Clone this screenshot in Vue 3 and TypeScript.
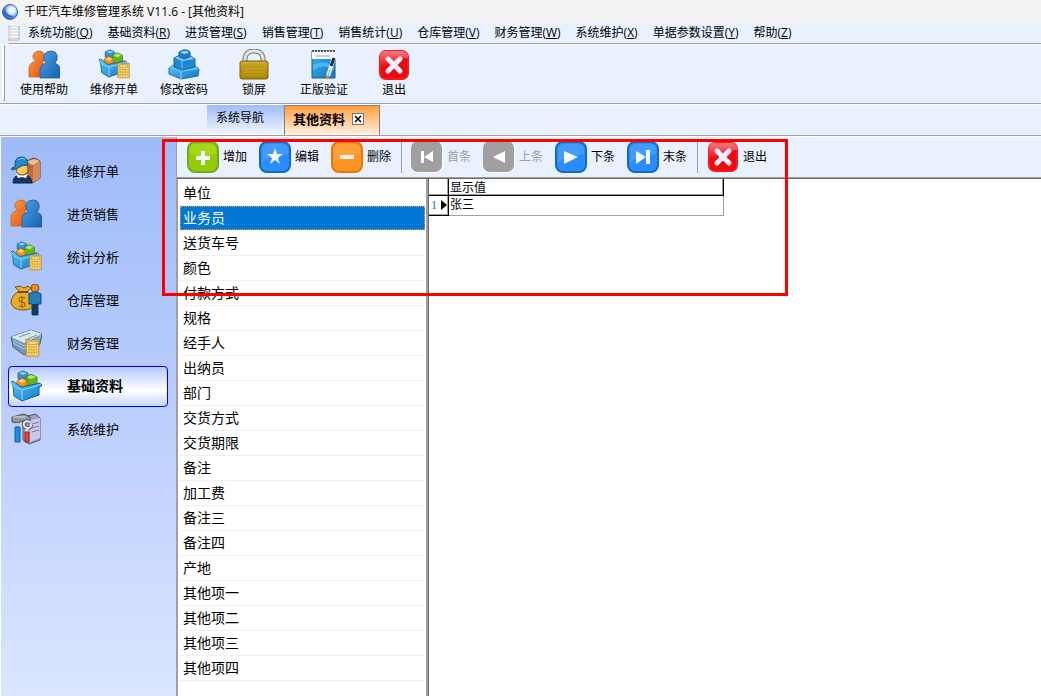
<script setup lang="ts">
import { ref } from 'vue'

interface MenuEntry { label: string; key: string }
interface Action { label: string; icon: string; disabled?: boolean }

const menus: MenuEntry[] = [
  { label: '系统功能', key: 'Q' },
  { label: '基础资料', key: 'R' },
  { label: '进货管理', key: 'S' },
  { label: '销售管理', key: 'T' },
  { label: '销售统计', key: 'U' },
  { label: '仓库管理', key: 'V' },
  { label: '财务管理', key: 'W' },
  { label: '系统维护', key: 'X' },
  { label: '单据参数设置', key: 'Y' },
  { label: '帮助', key: 'Z' },
]

const tools: Action[] = [
  { label: '使用帮助', icon: 'people' },
  { label: '维修开单', icon: 'boxcalc' },
  { label: '修改密码', icon: 'blocks' },
  { label: '锁屏', icon: 'lock' },
  { label: '正版验证', icon: 'note' },
  { label: '退出', icon: 'close' },
]

const modules: Action[] = [
  { label: '维修开单', icon: 'courier' },
  { label: '进货销售', icon: 'people' },
  { label: '统计分析', icon: 'boxcalc' },
  { label: '仓库管理', icon: 'bag' },
  { label: '财务管理', icon: 'money' },
  { label: '基础资料', icon: 'box' },
  { label: '系统维护', icon: 'repair' },
]
const activeModule = ref('基础资料')

const recordGroups: Action[][] = [
  [
    { label: '增加', icon: 'add' },
    { label: '编辑', icon: 'star' },
    { label: '删除', icon: 'minus' },
  ],
  [
    { label: '首条', icon: 'first', disabled: true },
    { label: '上条', icon: 'prev', disabled: true },
    { label: '下条', icon: 'next' },
    { label: '末条', icon: 'last' },
  ],
  [{ label: '退出', icon: 'close' }],
]

const categories: string[] = [
  '单位', '业务员', '送货车号', '颜色', '付款方式', '规格', '经手人', '出纳员', '部门', '交货方式',
  '交货期限', '备注', '加工费', '备注三', '备注四', '产地', '其他项一', '其他项二', '其他项三', '其他项四',
]
const activeCategory = ref('业务员')
const rows: string[] = ['张三']
</script>

<template>
  <div class="app">
    <svg class="defs" width="0" height="0" aria-hidden="true">
      <defs>
        <linearGradient id="gOrange" x1="0" y1="0" x2="1" y2="1"><stop offset="0" stop-color="#ffa04a" /><stop offset="1" stop-color="#e04e08" /></linearGradient>
        <linearGradient id="gBlue" x1="0" y1="0" x2="1" y2="1"><stop offset="0" stop-color="#52a3e2" /><stop offset="1" stop-color="#1261b4" /></linearGradient>
        <linearGradient id="gSky" x1="0" y1="0" x2="1" y2="1"><stop offset="0" stop-color="#5ec6f6" /><stop offset="1" stop-color="#0f78c4" /></linearGradient>
        <linearGradient id="gRed" x1="0" y1="0" x2="0" y2="1"><stop offset="0" stop-color="#f8868a" /><stop offset="1" stop-color="#f0141c" /></linearGradient>
        <linearGradient id="gGold" x1="0" y1="0" x2="0" y2="1"><stop offset="0" stop-color="#c9a92a" /><stop offset=".5" stop-color="#b8940c" /><stop offset="1" stop-color="#a98505" /></linearGradient>
        <linearGradient id="gPage" x1="0" y1="0" x2="1" y2="1"><stop offset="0" stop-color="#35b2ea" /><stop offset="1" stop-color="#1479c4" /></linearGradient>
        <radialGradient id="gOrb" cx=".62" cy=".38" r=".65"><stop offset="0" stop-color="#ffffff" /><stop offset=".4" stop-color="#cfe5fb" /><stop offset=".75" stop-color="#4e8edb" /><stop offset="1" stop-color="#1d57b4" /></radialGradient>

        <symbol id="i-people" viewBox="0 0 32 32">
          <path d="M1 28V19q0-5 7-7Q4 10 5 6q2-4 6-4t6 4q1 4-2 7v15z" fill="url(#gOrange)" stroke="#c06a30" stroke-width=".8" />
          <path d="M12 29V21q0-5 6-7-3-4-2-8 2-4 7-4t6 4q1 5-2 8 5 2 5 6v9z" fill="url(#gBlue)" stroke="#235c9b" stroke-width=".8" />
        </symbol>
        <symbol id="i-box" viewBox="0 0 32 32">
          <path d="M8 3l5-2 5 2v6l-5 2-5-2z" fill="#2f8fd6" stroke="#1c5f9e" stroke-width=".8" /><path d="M9 3l4-1 4 1-4 2z" fill="#8fd4fa" />
          <path d="M16 7l5-3 6 3v9H16z" fill="#64b41c" stroke="#407f18" stroke-width=".8" /><path d="M17 7l4-2 5 2-5 2z" fill="#b5ea62" />
          <path d="M7 11l5-3 5 3v7H7z" fill="#f8921a" stroke="#ad6710" stroke-width=".8" /><path d="M8 11l4-2 4 2-4 2z" fill="#ffd45d" />
          <path d="M1 12l2-1 8 6 19-4 2 2-3 3v7L12 31 4 26l-1-10z" fill="url(#gSky)" stroke="#1c618f" />
          <path d="M1 12l3 4 8 4 11-3 8-3M12 20v10" fill="none" stroke="#8adeff" />
        </symbol>
        <symbol id="i-calc" viewBox="0 0 16 20">
          <path d="M1 1h14v18H1z" fill="#f8cf68" stroke="#b68529" /><path d="M3 3h10v3H3z" fill="#e3e69a" stroke="#a88c36" stroke-width=".7" />
          <path d="M3 9h10M3 12h10M3 15h10" stroke="#c89a38" stroke-width="1.5" stroke-dasharray="2 1" />
        </symbol>
        <symbol id="i-boxcalc" viewBox="0 0 32 32"><use href="#i-box" width="29" height="29" /><use href="#i-calc" x="19" y="13" width="13" height="17" /></symbol>
        <symbol id="i-blocks" viewBox="0 0 32 32">
          <path d="M1 19l6-4h18l6 5-1 7-17 3L1 25z" fill="url(#gSky)" stroke="#1f70ae" /><path d="M1 19l12 4 18-3-6-5H7z" fill="#5fc0f2" /><path d="M13 23v7" stroke="#8cddff" fill="none" />
          <path d="M6 9l6-3h9l6 4v8l-13 3-8-3z" fill="#1f86d0" stroke="#1765a3" /><path d="M7 9l7 3 12-2-5-4h-8z" fill="#7bd3fb" /><path d="M14 12v8" stroke="#69c6f5" />
          <path d="M11 3l4-2h4l3 2v5l-6 2-5-2z" fill="#1d7cc8" stroke="#1765a3" /><path d="M12 3l4 2 5-1-2-2h-4z" fill="#8bdcff" />
        </symbol>
        <symbol id="i-lock" viewBox="0 0 32 32">
          <path d="M7 14V9q1-7 9-7t9 7v5" fill="none" stroke="#777" stroke-width="5" /><path d="M7 14V9q1-7 9-7t9 7v5" fill="none" stroke="#e2e2e2" stroke-width="3" />
          <rect x="2" y="12" width="28" height="18" rx="2" fill="url(#gGold)" stroke="#806508" /><path d="M5 14h22M5 20h22M5 23h22M5 26h22" stroke="#e1c960" opacity=".4" />
        </symbol>
        <symbol id="i-note" viewBox="0 0 32 32">
          <path d="M4 2h23v27H4z" fill="url(#gPage)" stroke="#2e5773" /><path d="M4 2h24v8H4z" fill="#f6f8f9" /><path d="M4 2h24" stroke="#4b5a66" stroke-dasharray="2 1" stroke-width="2" /><path d="M8 7h14" stroke="#8ca8b9" />
          <path d="M5 16q9-6 21 1v4q-10-7-21 0z" fill="#6bd1f8" opacity=".55" /><path d="M27 5L20 27" stroke="#f4f8fb" stroke-width="4" /><path d="M26 9l-3 8" stroke="#142a48" stroke-width="3" /><path d="M22 20l-2 7" stroke="#8ba8cc" stroke-width="1" /><path d="M20 26l-1 4" stroke="#e09445" stroke-width="2" />
        </symbol>
        <symbol id="i-close" viewBox="0 0 32 32">
          <rect x="1" y="1" width="30" height="30" rx="7" fill="#f3080f" /><path d="M2 17V8q0-6 6-6h16q6 0 6 6v1Q22 9 15 13T2 17z" fill="url(#gRed)" opacity=".9" /><rect x="2" y="2" width="28" height="28" rx="6" fill="none" stroke="#ff7a7e" opacity=".3" />
          <path d="M10 10l12 12M22 10L10 22" stroke="#f0efff" stroke-width="5" stroke-linecap="round" />
        </symbol>
        <symbol id="i-courier" viewBox="0 0 32 32">
          <path d="M14 7l10-4 6 3v17l-7 5-9-4z" fill="#b96d3b" stroke="#663c25" /><path d="M15 7l8 3 7-4-6-2z" fill="#edc293" /><path d="M23 10l7-3v16l-7 5z" fill="#d58a57" />
          <circle cx="12" cy="14" r="6" fill="#ffcb55" stroke="#7f4e18" /><path d="M5 12V9q0-7 7-7 6 0 6 8-7 0-10 3l-6 2q-2-2 3-3z" fill="#2588c8" stroke="#155284" /><path d="M8 5q4-3 7-1" stroke="#7fd1f1" fill="none" />
          <path d="M3 28q0-7 6-8l3 3 4-3q5 1 6 8z" fill="#16395f" stroke="#0b223e" /><path d="M6 19l2 4 4-1 4 1 2-4-6 2z" fill="#fff" />
        </symbol>
        <symbol id="i-bag" viewBox="0 0 32 32">
          <path d="M9 7L5 3l5-1 4 2 4-2 3 2-4 4q8 4 7 12-1 6-11 6T1 19q0-7 8-12z" fill="#e7ad24" stroke="#81520d" /><path d="M8 8h10" stroke="#754208" stroke-width="2" /><path d="M15 14q-6-2-6 1 0 3 3 3t3 3-6 1M12 12v12" stroke="#87540e" fill="none" />
          <circle cx="25" cy="4" r="4" fill="#e98b22" stroke="#8a4f16" /><path d="M19 10q6-4 12 0v10h-3v11h-6V20h-3z" fill="#247fb8" stroke="#164772" /><path d="M22 20h6v11h-6z" fill="#173960" />
        </symbol>
        <symbol id="i-money" viewBox="0 0 32 32">
          <path d="M1 10L21 3l11 4-2 10-16 11L3 20z" fill="#7797b3" stroke="#45627f" /><path d="M1 10L21 3l11 4-18 9z" fill="#d6e7ee" /><path d="M3 13l11 6 17-9M3 16l11 6 16-9" stroke="#b4cbdb" fill="none" /><path d="M9 10l11-4M15 13l12-5" stroke="#7594aa" />
          <use href="#i-calc" x="15" y="12" width="15" height="18" />
        </symbol>
        <symbol id="i-repair" viewBox="0 0 32 32">
          <path d="M13 4l13-3 4 4v22l-11 4-6-4z" fill="#9c9ac9" stroke="#56547f" /><path d="M20 7l10-2v20l-10 4z" fill="#c9c8e8" /><path d="M22 11l7-2M22 15l7-2M22 19l7-2" stroke="#77749b" />
          <path d="M2 4l12-3 6 3v5l-8-1-4 2-6-1z" fill="#8e959b" stroke="#4c5359" /><path d="M3 4h13" stroke="#e2e6e9" /><path d="M6 10h3v5H6z" fill="#bdc7ce" /><path d="M5 14h5v15H5z" fill="#1c8fdd" stroke="#0e5c99" />
          <path d="M20 9q-4-2-6 1-1 4 3 5 4 0 4-3" fill="none" stroke="#596069" stroke-width="4" /><path d="M20 9q-4-2-6 1-1 4 3 5 4 0 4-3" fill="none" stroke="#e4e8eb" stroke-width="2" /><path d="M17 16v6" stroke="#dce2e6" stroke-width="3" /><path d="M15 19h4v10h-4z" fill="#e24237" stroke="#9a2420" />
        </symbol>
        <symbol id="i-add" viewBox="0 0 32 32"><rect x="1" y="1" width="30" height="30" rx="7" fill="#94cd08" stroke="#74a822" stroke-width="2" /><path d="M3 9q0-6 6-6h14q6 0 6 6v4q-13 3-26 0z" fill="#b2df27" opacity=".6" /><path d="M16 10v14M9 17h14" stroke="#f3f6ff" stroke-width="4" /></symbol>
        <symbol id="i-bluebase" viewBox="0 0 32 32"><rect x="1" y="1" width="30" height="30" rx="7" fill="#2a8dff" stroke="#1769bc" stroke-width="2" /><path d="M3 9q0-6 6-6h14q6 0 6 6v4Q15 14 3 21z" fill="#59a9ff" opacity=".5" /></symbol>
        <symbol id="i-star" viewBox="0 0 32 32"><use href="#i-bluebase" /><path d="M16 7l2 6h6l-5 4 2 6-5-4-5 4 2-6-5-4h6z" fill="#f3f6ff" /></symbol>
        <symbol id="i-minus" viewBox="0 0 32 32"><rect x="1" y="1" width="30" height="30" rx="7" fill="#ff9422" stroke="#e87512" stroke-width="2" /><path d="M3 9q0-6 6-6h14q6 0 6 6v4L3 20z" fill="#ffad50" opacity=".5" /><path d="M9 16h14" stroke="#f7f2f2" stroke-width="4" /></symbol>
        <symbol id="i-next" viewBox="0 0 32 32"><use href="#i-bluebase" /><path d="M9 10l14 6-14 7z" fill="#f3f6ff" /></symbol>
        <symbol id="i-last" viewBox="0 0 32 32"><use href="#i-bluebase" /><path d="M9 10l10 6-10 7zM19 9h4v14h-4z" fill="#f3f6ff" /></symbol>
        <symbol id="i-first" viewBox="0 0 32 32"><rect x="1" y="1" width="31" height="31" rx="7" fill="#fff" /><rect width="31" height="31" rx="7" fill="#a0a0a0" /><path d="M10 10h3v12h-3zM22 10v11l-9-5z" fill="#fff" /></symbol>
        <symbol id="i-prev" viewBox="0 0 32 32"><rect x="1" y="1" width="31" height="31" rx="7" fill="#fff" /><rect width="31" height="31" rx="7" fill="#a0a0a0" /><path d="M22 10v12l-12-6z" fill="#fff" /></symbol>
      </defs>
    </svg>

    <header class="titlebar">
      <svg class="orb" viewBox="0 0 16 16" aria-hidden="true"><circle cx="8" cy="8" r="7.500" fill="url(#gOrb)" stroke="#386bb5" /><path d="M3 4q-2 5 2 8 3 2 7 0-6 0-8-4-1-2-1-4z" fill="#2a66c2" /></svg>
      <span>千旺汽车维修管理系统 V11.6 - [其他资料]</span>
    </header>

    <nav class="menubar" aria-label="主菜单">
      <svg class="doc" viewBox="0 0 12 15" aria-hidden="true"><path d="M0 0h11v14H0z" fill="#fff" stroke="#aaa" /><path d="M2 3h8M2 6h8M2 9h8M2 12h8" stroke="#b9c4d1" /><path d="M2 1v13" stroke="#e3b9b9" /></svg>
      <button v-for="m in menus" :key="m.key" type="button" class="menu">{{ m.label }}(<u>{{ m.key }}</u>)</button>
    </nav>

    <div class="toolbar" role="toolbar" aria-label="常用功能">
      <span class="grip"></span>
      <button v-for="t in tools" :key="t.label" type="button" class="tool">
        <svg class="icon" aria-hidden="true"><use :href="'#i-' + t.icon" /></svg>
        <span>{{ t.label }}</span>
      </button>
    </div>

    <div class="tabs">
      <button type="button" class="tab">系统导航</button>
      <div class="tab current">
        <button type="button" class="tab-name">其他资料</button>
        <button type="button" class="tab-close" aria-label="关闭">
          <svg viewBox="0 0 10 10" aria-hidden="true"><path d="M2 2l6 6M8 2L2 8" stroke="#000" stroke-width="1.500" /></svg>
        </button>
      </div>
    </div>

    <div class="body">
      <nav class="sidebar" aria-label="模块">
        <button
          v-for="m in modules"
          :key="m.label"
          type="button"
          class="module"
          :class="{ active: m.label === activeModule }"
          @click="activeModule = m.label"
        >
          <svg class="icon" aria-hidden="true"><use :href="'#i-' + m.icon" /></svg>
          <span>{{ m.label }}</span>
        </button>
      </nav>

      <main class="workspace">
        <div class="records" role="toolbar" aria-label="记录操作">
          <div v-for="(g, i) in recordGroups" :key="i" class="group">
            <button v-for="a in g" :key="a.label" type="button" class="record" :disabled="a.disabled">
              <svg class="icon" aria-hidden="true"><use :href="'#i-' + a.icon" /></svg>
              <span>{{ a.label }}</span>
            </button>
          </div>
        </div>
        <div class="panes">
          <ul class="categories">
            <li v-for="c in categories" :key="c">
              <button type="button" class="category" :class="{ selected: c === activeCategory }" @click="activeCategory = c">{{ c }}</button>
            </li>
          </ul>
          <section class="grid-pane">
            <table class="grid">
              <thead>
                <tr><th class="rowhead"></th><th class="value">显示值</th></tr>
              </thead>
              <tbody>
                <tr v-for="(r, i) in rows" :key="r">
                  <th class="rowhead"><span class="marker">{{ i + 1 }}<i class="arrow"></i></span></th>
                  <td class="value">{{ r }}</td>
                </tr>
              </tbody>
            </table>
          </section>
        </div>
      </main>
      <div class="highlight" aria-hidden="true"></div>
    </div>
  </div>
</template>

<style>
html, body { height: 100%; }
body { margin: 0; overflow: hidden; }
#app { height: 100%; }
</style>

<style scoped>
.app {
  display: flex;
  flex-direction: column;
  height: 100%;
  background: #e9f0fe;
  color: #000;
  font: 12px/16px "Open Sans", "Noto Sans CJK SC", sans-serif;
}
.app * { box-sizing: border-box; }
.defs { position: absolute; }
button {
  margin: 0;
  padding: 0;
  border: 0;
  background: none;
  color: inherit;
  font: inherit;
  white-space: nowrap;
}
.icon { display: block; flex: none; width: 32px; height: 32px; }

.titlebar {
  display: flex;
  flex: none;
  align-items: center;
  gap: 6px;
  height: 23px;
  padding-left: 2px;
  background: #f3f3f3;
}
.orb { width: 16px; height: 16px; }

.menubar {
  display: flex;
  flex: none;
  align-items: center;
  gap: 15px;
  height: 22px;
  padding: 0 0 1px 8px;
  border-bottom: 1px solid #fff;
  background: linear-gradient(#a0a0a0, #a0a0a0) 9px 100% / 100% 1px no-repeat, #e8f1fe;
}
.doc { width: 12px; height: 15px; margin-right: -7px; }

.toolbar {
  display: flex;
  flex: none;
  height: 60px;
  padding-left: 2px;
  border-bottom: 1px solid #fff;
  background: linear-gradient(#a0a0a0, #a0a0a0) 0 100% / 100% 1px no-repeat;
}
.grip { width: 3px; height: 56px; margin-right: 4px; border: solid #a0a0a0; border-width: 0 1px 1px 0; border-left: 2px solid #fff; }
.tool {
  display: flex;
  flex-direction: column;
  align-items: center;
  gap: 1px;
  width: 70px;
  padding-top: 4px;
}

.tabs {
  display: flex;
  flex: none;
  height: 31px;
  padding-left: 207px;
  border-bottom: 1px solid #a0a0a0;
}
.tab {
  width: 77px;
  padding: 0 9px 4px;
  background: linear-gradient(#9ebbf8, #f4f7ff);
  text-align: left;
}
.tab.current {
  display: flex;
  align-items: center;
  gap: 7px;
  width: 96px;
  padding: 0 8px 3px;
  border: solid #7f7f7f;
  border-width: 1px 1px 0;
  background: linear-gradient(#ff9d3c, #fff3e4);
}
.tab-name { font-size: 13px; font-weight: bold; }
.tab-close { flex: none; width: 12px; height: 12px; border: 1px solid #777; background: #fff; }
.tab-close svg { display: block; width: 10px; height: 10px; }

.body { position: relative; display: flex; flex: 1; min-height: 0; border-top: 1px solid #fff; }
.sidebar {
  display: flex;
  flex: none;
  flex-direction: column;
  gap: 2px;
  width: 176px;
  padding: 14px 8px 0 7px;
  border-left: 1px solid #fff;
  background: linear-gradient(#9fbbf8, #c3d4fe 63%, #dbe6fe);
}
.module {
  display: flex;
  align-items: center;
  gap: 25px;
  height: 41px;
  padding: 0 0 2px 1px;
  border: 1px solid transparent;
  border-radius: 4px;
  font-size: 13px;
}
.module.active {
  border-color: #00f;
  background: linear-gradient(#b4c9fb, #fff 60%, #c4d5fd);
  font-size: 14px;
  font-weight: bold;
}

.workspace { display: flex; flex: 1; flex-direction: column; min-width: 0; border-left: 1px solid #a0a0a0; }
.records {
  display: flex;
  flex: none;
  align-items: center;
  height: 42px;
  padding: 0 0 2px 10px;
  border-bottom: 1px solid #696969;
  background: linear-gradient(#a0a0a0, #a0a0a0) 0 100% / 100% 1px no-repeat;
}
.group { display: flex; gap: 12px; }
.group + .group { margin-left: 10px; padding-left: 9px; border-left: 1px solid #a0a0a0; }
.record { display: flex; align-items: center; gap: 4px; height: 32px; }
.record:disabled { color: #a0a0a0; }

.panes { display: flex; flex: 1; min-height: 0; background: #fff; }
.categories {
  flex: none;
  width: 251px;
  margin: 0;
  padding: 2px 1px 0 2px;
  border: solid #a0a0a0;
  border-width: 0 2px 0 1px;
  list-style: none;
}
.categories li { height: 25px; border-bottom: 1px solid #f0f0f0; }
.category { display: block; width: 100%; height: 24px; padding-left: 3px; font-size: 14px; text-align: left; }
.category.selected { outline: 1px dotted #ff9a3c; outline-offset: -1px; background: #0078d7; color: #fff; }

.grid-pane { flex: 1; border-left: 1px solid #696969; }
.grid { border-spacing: 0; table-layout: fixed; width: 295px; }
.grid th, .grid td { padding: 0 0 0 1px; font-weight: normal; text-align: left; }
.grid thead th {
  height: 17px;
  border-right: 1px solid #000;
  border-bottom: 1px solid #000;
  box-shadow: inset -1px -1px #a0a0a0;
  line-height: 15px;
}
.grid tbody th, .grid tbody td { height: 20px; padding-bottom: 1px; }
.grid .rowhead { width: 20px; }
.grid tbody .rowhead { border-right: 1px solid #000; border-bottom: 1px solid #000; box-shadow: inset -1px -1px #a0a0a0; }
.grid tbody .value { border-right: 1px solid #a0a0a0; border-bottom: 1px solid #a0a0a0; }
.marker { display: flex; align-items: center; justify-content: space-between; padding: 0 1px; color: #1a74c4; font-family: "Liberation Serif", serif; }
.arrow { border: solid transparent; border-width: 5px 0 5px 6px; border-left-color: #000; }

.highlight {
  position: absolute;
  top: 2px;
  left: 162px;
  width: 626px;
  height: 157px;
  border: 3px solid #f00;
  pointer-events: none;
}
</style>
